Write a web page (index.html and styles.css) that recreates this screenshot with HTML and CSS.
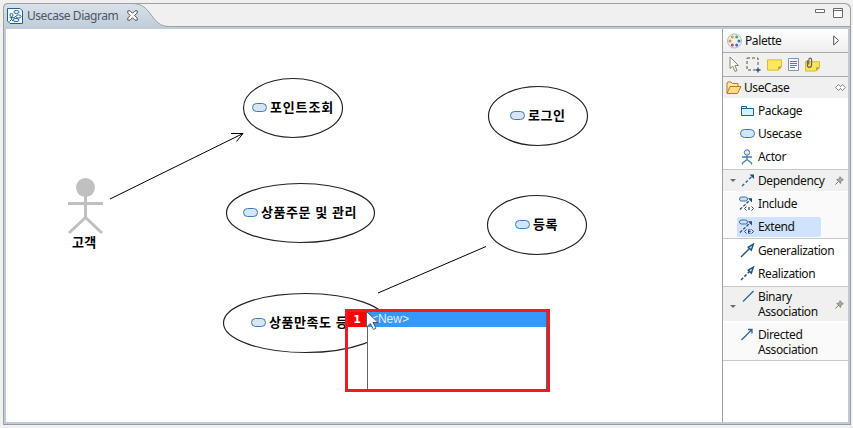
FILE: index.html
```html
<!DOCTYPE html>
<html lang="ko">
<head>
<meta charset="utf-8">
<title>Usecase Diagram</title>
<link rel="stylesheet" href="styles.css">
</head>
<body>
<svg class="defs" width="0" height="0">
  <defs>
    <symbol id="usecase" viewBox="0 0 15 9"><rect x=".5" y=".5" width="14" height="8" rx="4" fill="#d6e5f3" stroke="#3a7bb5"/></symbol>
    <symbol id="pin" viewBox="0 0 9 9"><path d="M5 .7 8.3 4 7.2 4.2 5.8 5.7 5.6 7.4 1.7 3.5 3.3 3.2 4.8 1.8Z" fill="#aaa89e" stroke="#77756c" stroke-width=".8"/><path d="M3.4 5.5.4 8.6" stroke="#77756c"/></symbol>
    <symbol id="dep" viewBox="0 0 15 15"><path d="M1 13 11 3.5" stroke="#2d6391" stroke-width="1.4" stroke-dasharray="3 2"/><path d="M8.5 1.5H13V6Z" fill="#1f4e79"/></symbol>
    <symbol id="open-arrow" viewBox="0 0 15 15"><path d="M8.3 4.2 13.3 1.2 11.3 7.2 9.5 5.4Z" fill="#e2edf6" stroke="#1f5685" stroke-width="1.5"/></symbol>
    <symbol id="rel" viewBox="0 0 16 16"><rect x="1.5" y="1" width="8" height="4" rx="2" fill="#cfe0f0" stroke="#3a71a4"/><path d="M2 13.5 12 4" stroke="#23476d" stroke-width="1.2" stroke-dasharray="3 1.5"/><path d="M10 2.3H14V6.5Z" fill="#23476d"/><path d="M8.5 10.5 6.5 12.5 8.5 14.5M13.5 10.5 15.5 12.5 13.5 14.5" fill="none" stroke="#23476d"/></symbol>
  </defs>
</svg>
<div class="editor">
  <header class="tabbar">
    <svg class="tab-shape" width="170" height="26" viewBox="0 0 170 26">
      <defs><linearGradient id="tabfill" x2="0" y2="1"><stop stop-color="#dae2ea"/><stop offset="1" stop-color="#bdcbda"/></linearGradient></defs>
      <path d="M0 26V5.5Q0 .5 5 .5H129C150 .5 147 23.5 166 23.5H170V26Z" fill="url(#tabfill)"/>
      <path d="M.5 26V5.5Q.5 .5 5.5 .5H129C150 .5 147 23.5 166 23.5H170" fill="none" stroke="#a0a0a0"/>
    </svg>
    <div class="tab">
      <svg width="16" height="16" viewBox="0 0 16 16"><path d="M.5.5H13L15.5 3V15.5H3L.5 13Z" fill="#fff" stroke="#1e6395"/><g fill="#e6f1fa" stroke="#28689c"><ellipse cx="9.5" cy="4" rx="2.6" ry="1.6"/><ellipse cx="11.5" cy="8.5" rx="2.6" ry="1.6"/><ellipse cx="9" cy="12" rx="3" ry="1.6"/><circle cx="4.5" cy="7" r="1.6"/></g><path d="M4.5 9V11.5L2.5 13.5M4.5 11.5 6 13M2.5 9.7H7L9 8" fill="none" stroke="#28689c"/></svg>
      <span class="tab-title">Usecase Diagram</span>
      <svg class="close" width="11" height="11" viewBox="0 0 11 11"><path d="M.8.8H3L5.5 3.3 8 .8H10.2V3L7.7 5.5 10.2 8V10.2H8L5.5 7.7 3 10.2H.8V8L3.3 5.5.8 3Z" fill="#fff" stroke="#555"/></svg>
    </div>
    <svg class="winbtns" width="29" height="11" viewBox="0 0 29 11"><path d="M.5 1.5H9.5V4.5H.5Z" fill="#fff" stroke="#6b6b6b"/><path d="M18.5 .5H27.5V9.5H18.5ZM18 2.5H28" fill="#fff" stroke="#6b6b6b"/></svg>
  </header>
  <div class="body">
    <main class="canvas">
      <svg class="shapes" width="716" height="393" viewBox="6 29 716 393" fill="none" stroke="#000">
        <g stroke-width="1.15" stroke="#222">
          <ellipse cx="293" cy="108" rx="49.5" ry="29.5"/>
          <ellipse cx="300.5" cy="213" rx="74" ry="29.5"/>
          <ellipse cx="305.5" cy="323" rx="82" ry="29.5"/>
          <ellipse cx="538" cy="116" rx="49.5" ry="29.5"/>
          <ellipse cx="537" cy="225" rx="49.5" ry="29.5"/>
        </g>
        <path d="M110 199 243 133.5M231 133.5H243L236.5 141.5M378 293 486 246.500"/>
        <circle cx="85.500" cy="187.500" r="9.5" fill="#c0c0c0" stroke="none"/>
        <path d="M85.500 196V218M68 203.500H103M69 233 85.500 217.500 102 233" stroke="#c0c0c0" stroke-width="3"/>
      </svg>
      <div class="actor-name">고객</div>
      <div class="node point"><svg><use href="#usecase"/></svg><span>포인트조회</span></div>
      <div class="node order"><svg><use href="#usecase"/></svg><span>상품주문 및 관리</span></div>
      <div class="node satis"><svg><use href="#usecase"/></svg><span>상품만족도 등</span></div>
      <div class="node login"><svg><use href="#usecase"/></svg><span>로그인</span></div>
      <div class="node regist"><svg><use href="#usecase"/></svg><span>등록</span></div>
      <div class="popup">
        <div class="badge">1</div>
        <div class="list"><div class="option">&lt;New&gt;</div></div>
        <svg class="cursor" width="14" height="20" viewBox="0 0 14 20"><path d="M.5.5V16L4.300 12.500 7.500 18.500 10 17.200 7 11.500H12Z" fill="#fff" stroke="#333d4c" stroke-width=".8"/></svg>
      </div>
    </main>
    <aside class="palette">
      <div class="pal-head">
        <svg width="16" height="16" viewBox="0 0 16 16"><circle cx="7.500" cy="8" r="7" fill="#eaf1fa" stroke="#aab9cf"/><circle cx="5.300" cy="4" r="1.500" fill="#d8a526"/><circle cx="9.700" cy="4" r="1.500" fill="#54a838"/><circle cx="12" cy="8" r="1.500" fill="#2777c4"/><circle cx="9.700" cy="12" r="1.500" fill="#6950b1"/><circle cx="5.300" cy="12" r="1.500" fill="#d34141"/><circle cx="3" cy="8" r="1.500" fill="#f28a1c"/></svg>
        <span class="grow">Palette</span>
        <svg width="7" height="11" viewBox="0 0 7 11"><path d="M.7 1V10L5.700 5.500Z" fill="#fff" stroke="#555"/></svg>
      </div>
      <div class="tools">
        <svg width="11" height="17" viewBox="0 0 11 17"><path d="M1 1V12.500L3.800 10.200 6 15.500 8 14.600 5.900 9.500H9.500Z" fill="#fffff0" stroke="#85857a"/></svg>
        <svg width="15" height="16" viewBox="0 0 15 16"><path d="M1 1H12V13H1Z" fill="none" stroke="#54542e" stroke-dasharray="3 2"/><path d="M9 10H15V16H9Z" fill="#f0f0f0"/><path d="M9.500 13H14.500M12 10.500V15.500" stroke="#224a80" stroke-width="1.300"/></svg>
        <svg width="15" height="12" viewBox="0 0 16 12"><path d="M.5.5H15.500V8L12 11.500H.5Z" fill="#fbe765" stroke="#d6b62c"/><path d="M15.500 7.500H12V11.500Z" fill="#c5981b"/></svg>
        <svg width="11" height="13" viewBox="0 0 11 13"><path d="M.5.5H10.500V12.500H.5Z" fill="#f6f9ff" stroke="#8d91a0"/><path d="M2 3.500H9M2 5.500H9M2 7.500H9M2 9.500H7" stroke="#5577bd"/></svg>
        <svg width="15" height="15" viewBox="0 0 16 15"><path d="M.5 4.500H15.500V11L12 14.500H.5Z" fill="#fbe25b" stroke="#d6b62c"/><path d="M15.500 10.500H12V14.500Z" fill="#c5981b"/><path d="M2.500 3V8Q2.500 10.500 4.700 10.500T7 8V3Q7 .7 5.500 .7T4 3V7.500" fill="none" stroke="#63604b" stroke-width="1.200"/></svg>
      </div>
      <div class="usecase-head">
        <svg width="16" height="13" viewBox="0 0 16 13"><path d="M1 12V2L2 1H5L6.500 2.500H12V5" fill="#ffe9a8" stroke="#b87828"/><path d="M1 12.500 4 5.500H15L11.500 12.500Z" fill="#ffdc87" stroke="#b87828"/></svg>
        <span class="grow">UseCase</span>
        <svg width="11" height="7" viewBox="0 0 11 7"><path d="M3.500 .5.700 3.500 3.500 6.500 5.500 4.300 7.500 6.500 10.300 3.500 7.500.5 5.500 2.700Z" fill="#fff" stroke="#666" stroke-width=".8"/></svg>
      </div>
      <ul class="items first">
        <li><svg width="15" height="15" viewBox="0 0 15 15"><path d="M1.500 3.500H6.500V5.500H13.500V12.500H1.500ZM1.500 5.500H7" fill="#dcedf8" stroke="#1c638f"/></svg>Package</li>
        <li><svg width="15" height="9"><use href="#usecase"/></svg>Usecase</li>
        <li><svg width="15" height="16" viewBox="0 0 15 16"><circle cx="7" cy="3.500" r="2.700" fill="#dce9f4" stroke="#4a7ba7"/><path d="M7 6.500V10.500M2 8H12M2.500 15.500V14L7 10.500 11.500 14V15.500" fill="none" stroke="#4a7ba7" stroke-width="1.300"/></svg>Actor</li>
      </ul>
      <div class="stack dep-head">
        <i class="caret"></i><svg width="15" height="15"><use href="#dep"/></svg><span class="grow">Dependency</span><svg width="9" height="9"><use href="#pin"/></svg>
      </div>
      <ul class="items sub">
        <li><span class="pick"><svg width="16" height="16"><use href="#rel"/><path d="M11 11V14" stroke="#23476d" stroke-width="1.200"/></svg>Include</span></li>
        <li><span class="pick on"><svg width="16" height="16"><use href="#rel"/><path d="M12.500 10.800H10.500V14.200H12.500M10.500 12.500H12.500" fill="none" stroke="#23476d"/></svg>Extend</span></li>
      </ul>
      <ul class="items pair">
        <li><svg width="15" height="15"><path d="M1 14 9.500 5.500" stroke="#1f5685" stroke-width="1.400"/><use href="#open-arrow"/></svg>Generalization</li>
        <li><svg width="15" height="15"><path d="M1 14 9.500 5.500" stroke="#1f5685" stroke-width="1.500" stroke-dasharray="3 1.800"/><use href="#open-arrow"/></svg>Realization</li>
      </ul>
      <div class="stack bin-head">
        <i class="caret"></i><svg class="raise" width="15" height="15"><path d="M2 12.500 12.500 2" stroke="#2d6391" stroke-width="1.300"/></svg><span class="grow">Binary<br>Association</span><svg width="9" height="9"><use href="#pin"/></svg>
      </div>
      <div class="directed">
        <svg class="raise" width="15" height="15"><path d="M1.500 13 12 2.500M8 2.500H12V6.500" fill="none" stroke="#2d6391" stroke-width="1.300"/></svg><span>Directed<br>Association</span>
      </div>
    </aside>
  </div>
</div>
</body>
</html>
```
FILE: styles.css
```css
* { box-sizing: border-box; }
body { margin: 0; padding: 3px 2px 3px 3px; width: 853px; height: 428px; background: #f0f0f0; font: 12px/15px "Noto Sans", "Noto Sans CJK KR", sans-serif; color: #111; overflow: hidden; }
svg { display: block; flex: none; }
.defs { position: absolute; }
.editor { width: 848px; height: 422px; border: 1px solid #a0a0a0; border-bottom-color: #999; border-radius: 5px 6px 0 0; background: #bdcbda; }
.tabbar { position: relative; display: flex; height: 23px; justify-content: space-between; background: #f0f0f0; border-bottom: 1px solid #a0a0a0; border-radius: 5px 6px 0 0; }
.tab-shape { position: absolute; left: -1px; top: -1px; }
.tab { position: relative; display: flex; align-items: center; height: 22px; padding: 1px 0 0 3px; color: #4e5763; }
.tab-title { margin-left: 4px; width: 92px; letter-spacing: -.45px; white-space: nowrap; }
.close { margin-left: 8px; }
.winbtns { margin: 4px 6px 0 0; }
.body { display: flex; margin: 2px 1px 0 2px; width: 842px; height: 393px; background: #fff; }
.canvas { position: relative; width: 716px; flex: none; background: #fff; }
.shapes { position: absolute; left: 0; top: 0; }
.node { position: absolute; display: flex; align-items: center; gap: 3px; height: 16px; font: bold 13px/16px "Noto Sans CJK KR", sans-serif; color: #000; white-space: nowrap; letter-spacing: .55px; }
.node svg { width: 15px; height: 9px; margin-top: 1px; }
.point { left: 246px; top: 70px; letter-spacing: .85px; }
.order { left: 237px; top: 175px; }
.satis { left: 245px; top: 285px; }
.login { left: 504px; top: 78px; }
.regist { left: 509px; top: 187px; }
.actor-name { position: absolute; left: 66px; top: 205px; font: bold 13px/16px "Noto Sans CJK KR", sans-serif; color: #000; letter-spacing: .3px; }
.popup { position: absolute; left: 339px; top: 280px; width: 205px; height: 83px; border: 3px solid #ed1c24; display: flex; }
.badge { width: 18px; height: 15px; background: #f00; color: #fff; text-align: center; font: bold 11px/15px "DejaVu Sans", sans-serif; }
.list { width: 181px; background: #fff; border: solid #646464; border-width: 0 1px; margin-left: 1px; }
.option { height: 15px; margin-left: -1px; padding-left: 4px; background: #39f; color: #e5efff; font: 12px/15px "Liberation Sans", sans-serif; }
.cursor { position: absolute; left: 18px; top: -1px; }
.palette { width: 126px; border-left: 1px solid #a0a0a0; display: flex; flex-direction: column; background: #fff; letter-spacing: -.4px; }
.pal-head { display: flex; align-items: center; height: 24px; padding: 0 8px 0 4px; gap: 2px; background: linear-gradient(#fff, #eee); border-bottom: 1px solid #aaa; }
.grow { flex: 1; }
.tools { display: flex; align-items: center; gap: 6px; height: 24px; padding-left: 6px; background: #f0f0f0; border-bottom: 1px solid #aaa; }
.usecase-head { display: flex; align-items: center; height: 21px; padding: 0 2px 0 3px; gap: 2px; background: #f0f0f0; }
.items { list-style: none; margin: 0; padding: 0; }
.items li { display: flex; align-items: center; height: 23px; gap: 3px; padding-left: 17px; }
.items.first { height: 71px; padding-top: 1px; }
.stack { display: flex; align-items: center; border-top: 1px solid #c8c8c8; background: #f0f0f0; padding: 0 4px 0 7px; }
.caret { border: 3px solid transparent; border-top-color: #6c6c6c; border-bottom: 0; margin-right: 5px; }
.stack .grow { margin-left: 2px; }
.dep-head { height: 22px; padding-bottom: 1px; }
.items.sub { margin-top: 1px; height: 47px; background: #fafafa; border-bottom: 1px solid #c8c8c8; }
.items.sub li { padding-left: 14px; }
.pick { display: flex; align-items: center; gap: 4px; height: 20px; width: 84px; padding-left: 1px; border-radius: 2px; }
.on { background: #cfe3fc; }
.items.pair { height: 47px; }
.bin-head { height: 35px; }
.raise { margin-bottom: 15px; }
.bin-head .caret { margin-top: 4px; }
.directed { display: flex; align-items: center; gap: 3px; height: 38px; margin-top: 2px; padding-left: 17px; background: #fafafa; border-bottom: 1px solid #c8c8c8; }
```
